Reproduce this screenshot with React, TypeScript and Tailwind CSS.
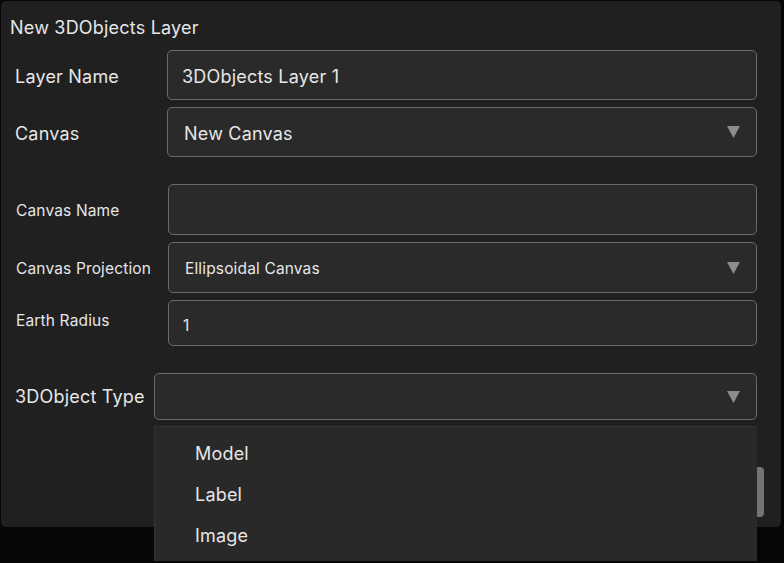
import React from "react";

const Tri = () => (
  <svg width="13" height="12" viewBox="0 0 13 12" className="shrink-0">
    <polygon points="0,0 13,0 6.5,12" fill="#8c8c8c" />
  </svg>
);

export default function App() {
  return (
    <div
      className="relative w-[784px] h-[563px] bg-[#060606] overflow-hidden text-[#e6e6e6] tracking-[0.2px]"
      style={{ fontFamily: "Inter, 'Noto Sans', sans-serif" }}
    >
      <div className="absolute left-[1px] top-[1px] w-[780px] h-[526px] rounded-[5px] bg-[#202020]">
        <div className="pl-[9px] pt-[15px] text-[18px] leading-[24px]">New 3DObjects Layer</div>

        <div className="flex items-center mt-[10px] pr-[24px]">
          <div className="w-[166px] pl-[14px] pt-[3px] text-[18px]">Layer Name</div>
          <div className="flex-1 h-[50px] flex items-center pt-[2px] px-[14px] rounded-[5px] border border-[#6a6a6a] bg-[#2a2a2a] text-[18px]">
            3DObjects Layer 1
          </div>
        </div>

        <div className="flex items-center mt-[7px] pr-[24px]">
          <div className="w-[166px] pl-[14px] pt-[3px] text-[18px]">Canvas</div>
          <div className="flex-1 h-[50px] flex items-center justify-between pl-[16px] pr-[16px] rounded-[5px] border border-[#6a6a6a] bg-[#2a2a2a] text-[18px]">
            <span className="pt-[2px]">New Canvas</span>
            <Tri />
          </div>
        </div>

        <div className="flex items-center mt-[27px] pr-[24px] tracking-[0.15px]">
          <div className="w-[167px] pl-[15px] pt-[2px] text-[15.5px]">Canvas Name</div>
          <div className="flex-1 h-[51px] rounded-[5px] border border-[#6a6a6a] bg-[#2a2a2a]" />
        </div>

        <div className="flex items-center mt-[7px] pr-[24px] tracking-[0.15px]">
          <div className="w-[167px] pl-[15px] pt-[2px] text-[15.5px]">Canvas Projection</div>
          <div className="flex-1 h-[51px] flex items-center justify-between pl-[16px] pr-[16px] rounded-[5px] border border-[#6a6a6a] bg-[#2a2a2a] text-[15.5px]">
            <span className="pt-[2px]">Ellipsoidal Canvas</span>
            <Tri />
          </div>
        </div>

        <div className="flex items-start mt-[7px] pr-[24px] tracking-[0.15px]">
          <div className="w-[167px] pl-[15px] pt-[9px] text-[15.5px]">Earth Radius</div>
          <div className="flex-1 h-[46px] flex items-center pl-[14px] pt-[6px] rounded-[5px] border border-[#6a6a6a] bg-[#2a2a2a] text-[15.5px]">
            1
          </div>
        </div>

        <div className="flex items-center mt-[27px] pr-[24px]">
          <div className="w-[153px] pl-[14px] text-[18px]">3DObject Type</div>
          <div className="flex-1 h-[47px] flex items-center justify-end pr-[16px] rounded-[5px] border border-[#6a6a6a] bg-[#2a2a2a]">
            <Tri />
          </div>
        </div>

        <div className="absolute left-[756px] top-[466px] w-[7px] h-[50px] rounded-r-[4px] bg-[#737373]" />
      </div>

      <div className="absolute left-[154px] top-[426px] w-[603px] h-[135px] bg-[#292929] border-l border-t border-[#333333] pt-[14px] text-[18px]">
        <div className="pl-[40px] h-[41px] leading-[26px]">Model</div>
        <div className="pl-[40px] h-[41px] leading-[26px]">Label</div>
        <div className="pl-[40px] h-[41px] leading-[26px]">Image</div>
      </div>
    </div>
  );
}
